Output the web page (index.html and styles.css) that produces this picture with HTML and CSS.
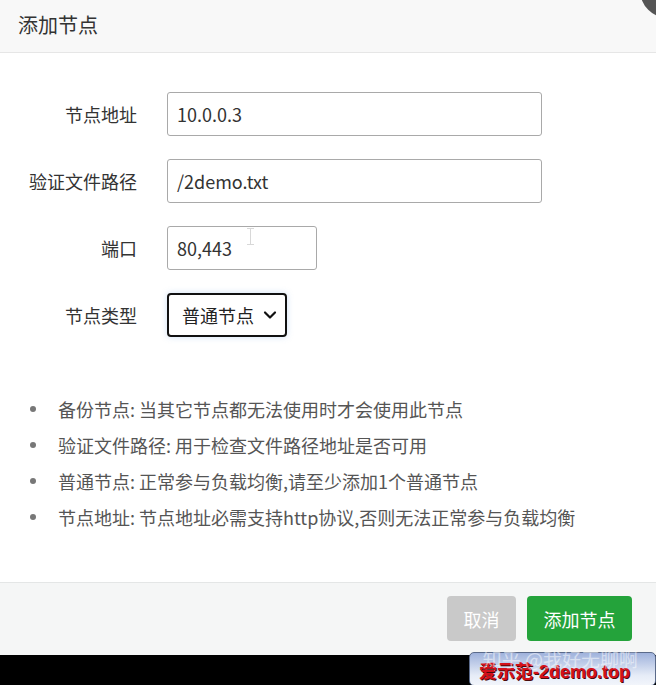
FILE: index.html
```html
<!DOCTYPE html>
<html lang="zh-CN">
<head>
<meta charset="utf-8">
<title>添加节点</title>
<link rel="stylesheet" href="styles.css">
</head>
<body>
<div class="dialog">
  <div class="close-btn"></div>
  <header class="dlg-head">添加节点</header>
  <main class="dlg-body">
    <div class="form">
      <div class="row">
        <label class="lbl">节点地址</label>
        <div class="field long">10.0.0.3</div>
      </div>
      <div class="row">
        <label class="lbl">验证文件路径</label>
        <div class="field long">/2demo.txt</div>
      </div>
      <div class="row">
        <label class="lbl">端口</label>
        <div class="field short">80,443<span class="ibeam"></span></div>
      </div>
      <div class="row">
        <label class="lbl">节点类型</label>
        <div class="select">普通节点
          <svg class="chev" width="14" height="10" viewBox="0 0 14 10"><path d="M2 2.5 L7 7.5 L12 2.5" fill="none" stroke="#111" stroke-width="2.2" stroke-linecap="round" stroke-linejoin="round"/></svg>
        </div>
      </div>
    </div>
    <ul class="tips">
      <li>备份节点: 当其它节点都无法使用时才会使用此节点</li>
      <li>验证文件路径: 用于检查文件路径地址是否可用</li>
      <li>普通节点: 正常参与负载均衡,请至少添加1个普通节点</li>
      <li>节点地址: 节点地址必需支持http协议,否则无法正常参与负载均衡</li>
    </ul>
  </main>
  <footer class="dlg-foot">
    <button class="btn btn-cancel">取消</button>
    <button class="btn btn-ok">添加节点</button>
  </footer>
</div>
<div class="strip">
  <div class="badge">
    <span class="badge-red">爱示范-2demo.top</span>
  </div>
  <span class="badge-zh">知乎 @我好无聊啊</span>
</div>
</body>
</html>
```

FILE: styles.css
```css
* { box-sizing: border-box; }
html, body {
  margin: 0;
  padding: 0;
  width: 656px;
  height: 685px;
  overflow: hidden;
  background: #000;
  font-family: "Noto Sans CJK SC", "Noto Sans", sans-serif;
  color: #333;
}
.dialog {
  position: relative;
  height: 655px;
  background: #fff;
  display: flex;
  flex-direction: column;
  overflow: hidden;
}
.close-btn {
  position: absolute;
  right: -40px;
  top: -38px;
  width: 56px;
  height: 56px;
  border-radius: 50%;
  background: #555;
}
.dlg-head {
  height: 53px;
  flex: none;
  background: #f8f8f8;
  border-bottom: 1px solid #e6e6e6;
  padding-left: 18px;
  font-size: 20px;
  line-height: 50px;
  color: #333;
}
.dlg-body {
  flex: 1;
  padding-top: 39px;
}
.form {
  display: flex;
  flex-direction: column;
  gap: 23px;
}
.row {
  display: flex;
  align-items: center;
  height: 44px;
}
.lbl {
  width: 137px;
  text-align: right;
  font-size: 18px;
  color: #333;
  margin-right: 30px;
}
.field {
  position: relative;
  height: 44px;
  border: 1px solid #a9a9a9;
  border-radius: 3px;
  padding-left: 9px;
  font-size: 18px;
  line-height: 42px;
  color: #333;
}
.field.long { width: 375px; }
.field.short { width: 150px; }
.ibeam {
  position: absolute;
  left: 82px;
  top: 1px;
  width: 1px;
  height: 17px;
  background: #d8d8d8;
}
.ibeam::before, .ibeam::after {
  content: "";
  position: absolute;
  left: -3px;
  width: 7px;
  height: 1px;
  background: #d8d8d8;
}
.ibeam::before { top: 0; }
.ibeam::after { bottom: 0; }
.select {
  width: 120px;
  height: 44px;
  border: 2px solid #111;
  border-radius: 4px;
  box-shadow: 0 0 6px rgba(120, 170, 230, 0.35);
  display: flex;
  align-items: center;
  padding-left: 13px;
  font-size: 18px;
  color: #222;
}
.chev { margin-left: 9px; }
.tips {
  list-style: none;
  margin: 54px 0 0;
  padding: 0 0 0 58px;
}
.tips li {
  position: relative;
  font-size: 18px;
  line-height: 36px;
  color: #555;
}
.tips li::before {
  content: "";
  position: absolute;
  left: -28px;
  top: 15px;
  width: 6px;
  height: 6px;
  border-radius: 50%;
  background: #777;
}
.dlg-foot {
  height: 73px;
  flex: none;
  background: #f5f6f6;
  border-top: 1px solid #e4e6e6;
  display: flex;
  justify-content: flex-end;
  align-items: flex-start;
  gap: 11px;
  padding: 13px 24px 0 0;
}
.btn {
  height: 45px;
  border: none;
  border-radius: 4px;
  font-family: inherit;
  font-size: 18px;
  color: #fff;
  padding: 0;
}
.btn-cancel { width: 69px; background: #c9c9c9; }
.btn-ok { width: 105px; background: #24a33b; }
.strip {
  position: relative;
  height: 30px;
  background: #000;
}
.badge {
  position: absolute;
  right: 0;
  top: -3px;
  width: 187px;
  height: 34px;
  border: 1px solid #5a6a8a;
  border-radius: 5px;
  background: linear-gradient(#9fb2dc, #e6ecf7 70%, #f2f5fb);
  overflow: hidden;
}
.badge-red {
  position: absolute;
  left: 9px;
  top: 4px;
  font-family: "Liberation Sans", "Noto Sans CJK SC", sans-serif;
  font-weight: bold;
  font-size: 18px;
  color: #d4111b;
  text-shadow: 1px 1px 0 #4a0a0a;
  white-space: nowrap;
}
.badge-zh {
  position: absolute;
  right: 18px;
  top: -9px;
  font-size: 19px;
  line-height: 26px;
  color: rgba(255, 255, 255, 0.5);
  white-space: nowrap;
}
```
